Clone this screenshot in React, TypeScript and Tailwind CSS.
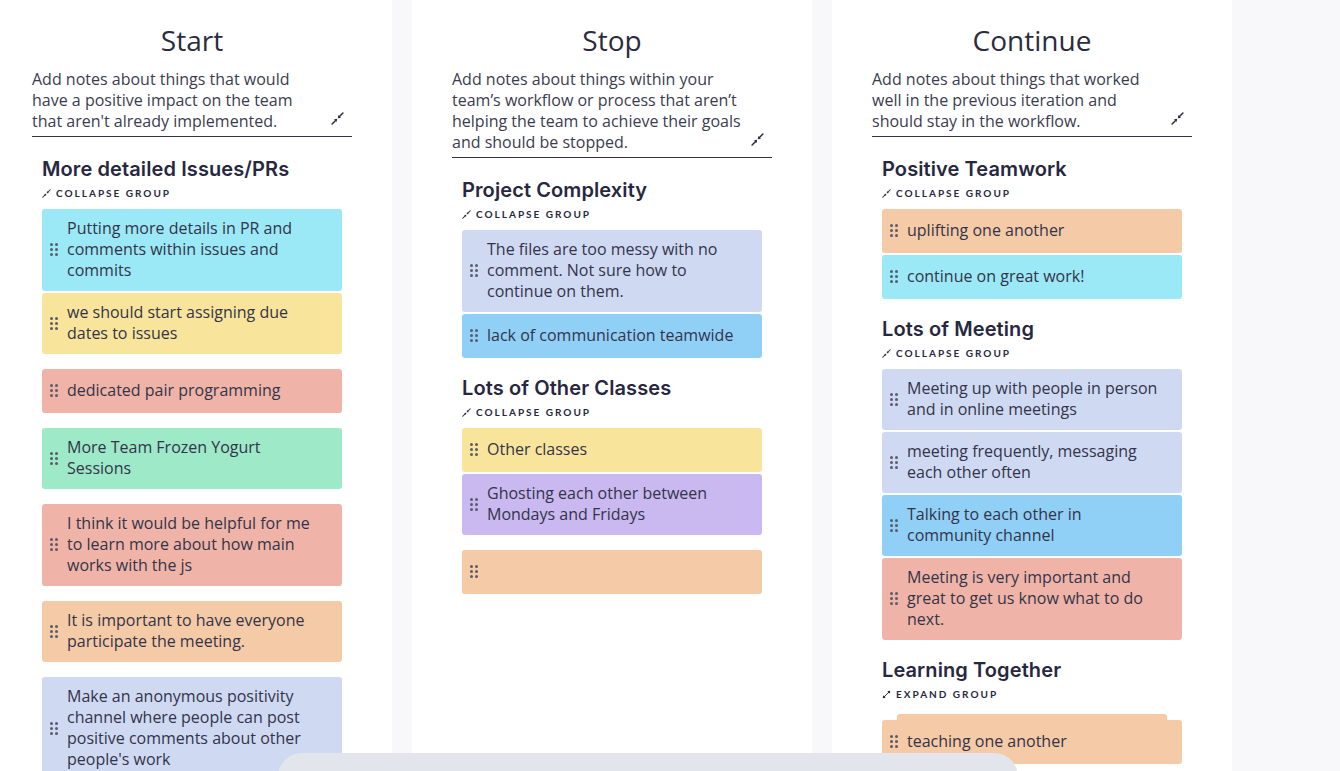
type Note = { text: string; color: string };
type Group = { title: string; collapsed?: boolean; notes: Note[] };
type Item = Note | Group;

const cyan = 'bg-[#9be8f6]';
const yellow = 'bg-[#f8e59b]';
const salmon = 'bg-[#efb4a7]';
const green = 'bg-[#9de9c8]';
const peach = 'bg-[#f5caa6]';
const lavender = 'bg-[#cfd9f2]';
const blue = 'bg-[#90cff6]';
const purple = 'bg-[#cab8f0]';

const columns: { title: string; desc: string; items: Item[] }[] = [
  {
    title: 'Start',
    desc: "Add notes about things that would have a positive impact on the team that aren't already implemented.",
    items: [
      {
        title: 'More detailed Issues/PRs',
        notes: [
          { text: 'Putting more details in PR and comments within issues and commits', color: cyan },
          { text: 'we should start assigning due dates to issues', color: yellow },
        ],
      },
      { text: 'dedicated pair programming', color: salmon },
      { text: 'More Team Frozen Yogurt Sessions', color: green },
      { text: 'I think it would be helpful for me to learn more about how main works with the js', color: salmon },
      { text: 'It is important to have everyone participate the meeting.', color: peach },
      {
        text: "Make an anonymous positivity channel where people can post positive comments about other people's work",
        color: lavender,
      },
    ],
  },
  {
    title: 'Stop',
    desc: "Add notes about things within your team\u2019s workflow or process that aren\u2019t helping the team to achieve their goals and should be stopped.",
    items: [
      {
        title: 'Project Complexity',
        notes: [
          { text: 'The files are too messy with no comment. Not sure how to continue on them.', color: lavender },
          { text: 'lack of communication teamwide', color: blue },
        ],
      },
      {
        title: 'Lots of Other Classes',
        notes: [
          { text: 'Other classes', color: yellow },
          { text: 'Ghosting each other between Mondays and Fridays', color: purple },
        ],
      },
      { text: '', color: peach },
    ],
  },
  {
    title: 'Continue',
    desc: 'Add notes about things that worked well in the previous iteration and should stay in the workflow.',
    items: [
      {
        title: 'Positive Teamwork',
        notes: [
          { text: 'uplifting one another', color: peach },
          { text: 'continue on great work!', color: cyan },
        ],
      },
      {
        title: 'Lots of Meeting',
        notes: [
          { text: 'Meeting up with people in person and in online meetings', color: lavender },
          { text: 'meeting frequently, messaging each other often', color: lavender },
          { text: 'Talking to each other in community channel', color: blue },
          { text: 'Meeting is very important and great to get us know what to do next.', color: salmon },
        ],
      },
      {
        title: 'Learning Together',
        collapsed: true,
        notes: [{ text: 'teaching one another', color: peach }],
      },
    ],
  },
];

// two arrow heads pointing at the middle, on one diagonal
function ShrinkIcon({ className }: { className?: string }) {
  return (
    <svg viewBox="0 0 12 12" className={className} fill="currentColor">
      <path d="M1 11 L4 8" stroke="currentColor" strokeWidth="1.4" strokeLinecap="round" />
      <path d="M11 1 L8 4" stroke="currentColor" strokeWidth="1.4" strokeLinecap="round" />
      <path d="M6.3 5.7 L9.2 5.2 L6.8 2.8 Z" />
      <path d="M5.7 6.3 L2.8 6.8 L5.2 9.2 Z" />
    </svg>
  );
}

function ExpandIcon({ className }: { className?: string }) {
  return (
    <svg viewBox="0 0 12 12" className={className} fill="currentColor">
      <path d="M2.5 9.5 L9.5 2.5" stroke="currentColor" strokeWidth="1.3" strokeLinecap="round" />
      <path d="M11 1 L10.4 5 L7 1.6 Z" />
      <path d="M1 11 L1.6 7 L5 10.4 Z" />
    </svg>
  );
}

function Handle() {
  return (
    <div className="grid grid-cols-2 gap-[2px] shrink-0">
      {[0, 1, 2, 3, 4, 5].map((i) => (
        <span key={i} className="block w-[3px] h-[3px] rounded-full bg-[#5b5b6b]" />
      ))}
    </div>
  );
}

function Card({ note }: { note: Note }) {
  return (
    <div className={`${note.color} rounded-[3px] min-h-[44px] flex items-center pl-[8px] pr-[16px] pt-[9px] pb-[10px]`}>
      <Handle />
      <p className="ml-[9px] text-[16px] leading-[21px] text-[#33344a]">{note.text}</p>
    </div>
  );
}

function GroupBlock({ group }: { group: Group }) {
  return (
    <div className="pt-[18px]">
      <h3 className="font-['Inter',sans-serif] font-semibold text-[20px] leading-[24px] text-[#272840] tracking-[0.1px]">
        {group.title}
      </h3>
      <div className="flex items-center gap-[5px] mt-[5px] mb-[8px] font-['Lato',sans-serif] font-bold text-[10px] tracking-[2px] text-[#272840]">
        {group.collapsed ? <ExpandIcon className="w-[9px] h-[9px]" /> : <ShrinkIcon className="w-[9px] h-[9px]" />}
        <span>{group.collapsed ? 'EXPAND GROUP' : 'COLLAPSE GROUP'}</span>
      </div>
      {group.collapsed ? (
        <div className="pt-[4px]">
          <div className="mx-[15px] h-[6px] bg-[#f5caa6] rounded-t-[3px]" />
          <Card note={group.notes[0]} />
        </div>
      ) : (
        <div className="flex flex-col gap-[2px]">
          {group.notes.map((n, i) => (
            <Card key={i} note={n} />
          ))}
        </div>
      )}
    </div>
  );
}

function Column({ col }: { col: (typeof columns)[number] }) {
  return (
    <div className="w-[400px] shrink-0 bg-white h-full px-[40px] overflow-hidden">
      <h2 className="text-center text-[28px] leading-[34px] text-[#2b2c40] pt-[23px] mb-[12px]">{col.title}</h2>
      <div className="flex items-end border-b-[1.5px] border-[#33344a] pb-[4px]">
        <p className="w-[292px] text-[16px] leading-[21px] text-[#3b3c50]">{col.desc}</p>
        <ShrinkIcon className="w-[13px] h-[13px] text-[#2b2c40] ml-auto mb-[7px] mr-[8px]" />
      </div>
      <div className="px-[10px] pt-[2px] flex flex-col">
        {col.items.map((item, i) =>
          'title' in item ? (
            <GroupBlock key={i} group={item} />
          ) : (
            <div key={i} className="mt-[15px]">
              <Card note={item} />
            </div>
          )
        )}
      </div>
    </div>
  );
}

export default function App() {
  return (
    <div className="relative w-[1340px] h-[771px] overflow-hidden bg-[#f8f8fa] font-['Open_Sans',sans-serif]">
      <div className="flex gap-[20px] h-full ml-[-8px]">
        {columns.map((c) => (
          <Column key={c.title} col={c} />
        ))}
      </div>
      <div className="absolute left-[278px] top-[753px] w-[740px] h-[60px] rounded-t-[24px] bg-[#e2e5ec]" />
    </div>
  );
}
